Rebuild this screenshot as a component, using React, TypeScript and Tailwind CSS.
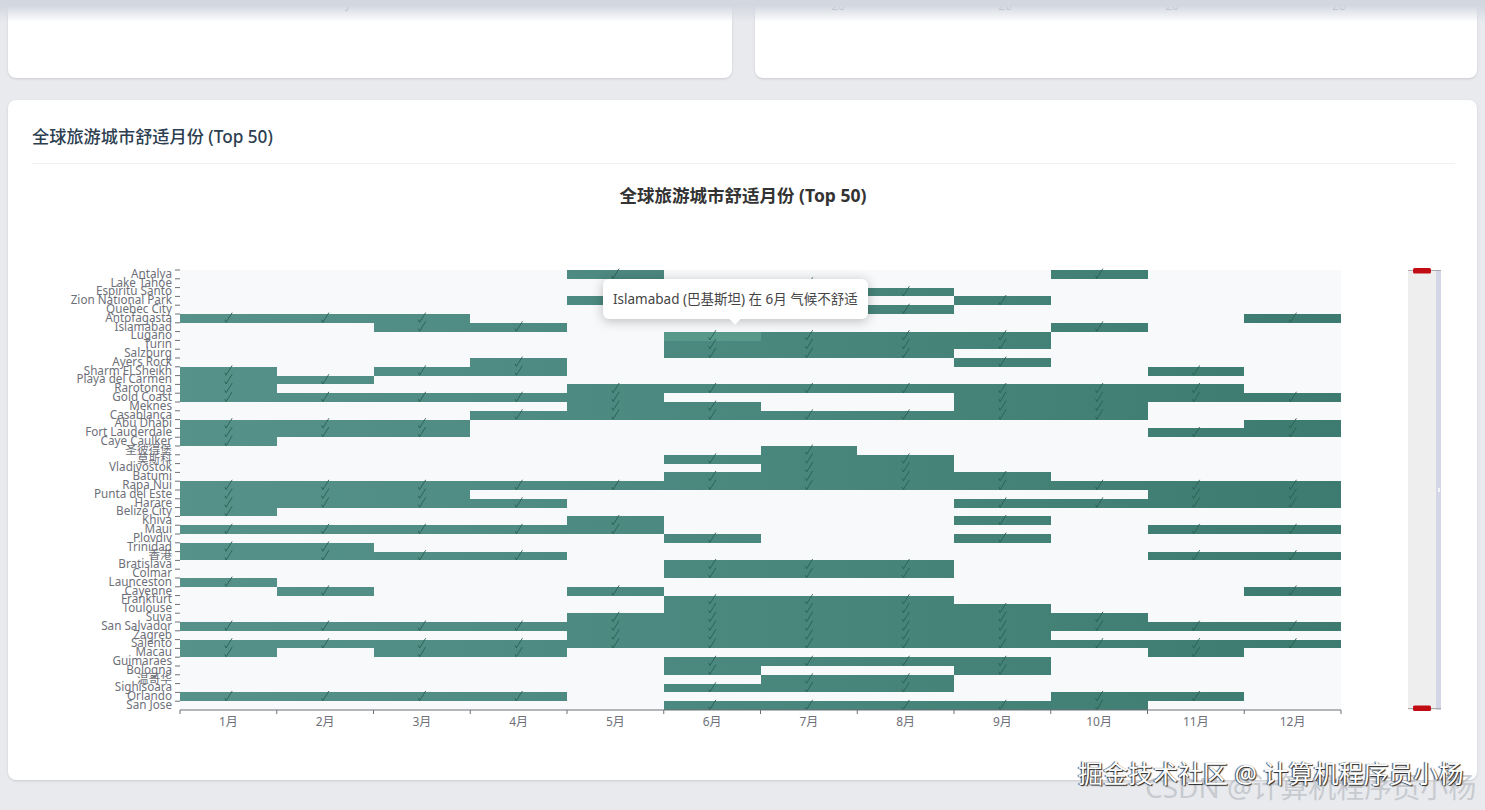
import React from 'react';

const months = ['1月', '2月', '3月', '4月', '5月', '6月', '7月', '8月', '9月', '10月', '11月', '12月'];

// city + comfortable months, top to bottom
const rows: [string, number[]][] = [
  ['Antalya', [5, 10]],
  ['Lake Tahoe', [7]],
  ['Espiritu Santo', [8]],
  ['Zion National Park', [5, 9]],
  ['Quebec City', [6, 7, 8]],
  ['Antofagasta', [1, 2, 3, 12]],
  ['Islamabad', [3, 4, 10]],
  ['Lugano', [6, 7, 8, 9]],
  ['Turin', [6, 7, 8, 9]],
  ['Salzburg', [6, 7, 8]],
  ['Ayers Rock', [4, 9]],
  ['Sharm El Sheikh', [1, 3, 4, 11]],
  ['Playa del Carmen', [1, 2]],
  ['Rarotonga', [1, 5, 6, 7, 8, 9, 10, 11]],
  ['Gold Coast', [1, 2, 3, 4, 5, 9, 10, 11, 12]],
  ['Meknes', [5, 6, 9, 10]],
  ['Casablanca', [4, 5, 6, 7, 8, 9, 10]],
  ['Abu Dhabi', [1, 2, 3, 12]],
  ['Fort Lauderdale', [1, 2, 3, 11, 12]],
  ['Caye Caulker', [1]],
  ['圣彼得堡', [7]],
  ['莫斯科', [6, 7, 8]],
  ['Vladivostok', [7, 8]],
  ['Batumi', [6, 7, 8, 9]],
  ['Rapa Nui', [1, 2, 3, 4, 5, 6, 7, 8, 9, 10, 11, 12]],
  ['Punta del Este', [1, 2, 3, 11, 12]],
  ['Harare', [1, 2, 3, 4, 9, 10, 11, 12]],
  ['Belize City', [1]],
  ['Khiva', [5, 9]],
  ['Maui', [1, 2, 3, 4, 5, 11, 12]],
  ['Plovdiv', [6, 9]],
  ['Trinidad', [1, 2]],
  ['香港', [1, 2, 3, 4, 11, 12]],
  ['Bratislava', [6, 7, 8]],
  ['Colmar', [6, 7, 8]],
  ['Launceston', [1]],
  ['Cayenne', [2, 5, 12]],
  ['Frankfurt', [6, 7, 8]],
  ['Toulouse', [6, 7, 8, 9]],
  ['Suva', [5, 6, 7, 8, 9, 10]],
  ['San Salvador', [1, 2, 3, 4, 5, 6, 7, 8, 9, 10, 11, 12]],
  ['Zagreb', [5, 6, 7, 8, 9]],
  ['Salento', [1, 2, 3, 4, 5, 6, 7, 8, 9, 10, 11, 12]],
  ['Macau', [1, 3, 4, 11]],
  ['Guimaraes', [6, 7, 8, 9]],
  ['Bologna', [6, 9]],
  ['温哥华', [7, 8]],
  ['Sighisoara', [6, 7, 8]],
  ['Orlando', [1, 2, 3, 4, 10, 11]],
  ['San Jose', [6, 7, 8, 9, 10]],
];

const LEFT = 180;
const TOP = 270;
const CELL_W = 96.75;
const CELL_H = 8.8;

function Heatmap() {
  return (
    <svg viewBox="32 170 1423 600" width={1423} height={600} className="mt-[6px] block">
      <defs>
        <linearGradient id="cellFill" gradientUnits="userSpaceOnUse" x1={LEFT} y1="0" x2={LEFT + CELL_W * 12} y2="0">
          <stop offset="0" stopColor="#56928a" />
          <stop offset="1" stopColor="#3d7b70" />
        </linearGradient>
      </defs>

      <text x="743" y="202" textAnchor="middle" className="fill-[#333333] text-[17.5px] font-bold">
        全球旅游城市舒适月份 (Top 50)
      </text>

      <rect x={LEFT} y={TOP} width={CELL_W * 12} height={CELL_H * 50} fill="#f7f9fb" />

      {rows.map(([city, filled], i) => {
        const y = TOP + i * CELL_H;
        return (
          <g key={city}>
            <line x1="175" x2={LEFT} y1={y} y2={y} stroke="#6e7079" />
            <text x="172" y={y + 7.8} textAnchor="end" className="fill-[#6e7079] text-[11.7px]">
              {city}
            </text>
            {filled.map((m) => (
              <rect
                key={m}
                x={LEFT + (m - 1) * CELL_W}
                y={Math.round(y)}
                width={CELL_W}
                height={Math.round(y + CELL_H) - Math.round(y)}
                fill="url(#cellFill)"
                shapeRendering="crispEdges"
              />
            ))}
          </g>
        );
      })}

      {/* hovered cell */}
      <rect x={LEFT + 5 * CELL_W} y="332" width={CELL_W} height="9" fill="#58998c" shapeRendering="crispEdges" />

      {rows.map(([city, filled], i) =>
        filled.map((m) => (
          <path
            key={city + m}
            d="M-3.5 2 L-2.3 4.6 L3.8 -5.2"
            transform={`translate(${LEFT + (m - 0.5) * CELL_W} ${TOP + i * CELL_H + 3.8})`}
            fill="none"
            stroke="#2a5f55"
            strokeWidth="0.9"
          />
        )),
      )}

      <line x1={LEFT} x2={LEFT + CELL_W * 12} y1="710" y2="710" stroke="#6e7079" />
      {Array.from({ length: 13 }).map((_, i) => (
        <line key={i} x1={LEFT + i * CELL_W} x2={LEFT + i * CELL_W} y1="710" y2="714" stroke="#6e7079" />
      ))}
      {months.map((m, i) => (
        <text key={m} x={LEFT + (i + 0.5) * CELL_W} y="726" textAnchor="middle" className="fill-[#6e7079] text-[12px]">
          {m}
        </text>
      ))}

      {/* visual map slider */}
      <rect x="1408" y="270" width="28" height="440" fill="#eeeeee" />
      <rect x="1436" y="270" width="5" height="440" fill="#d2d6e6" />
      <rect x="1408" y="270" width="33" height="1" fill="#aaaaaa" />
      <rect x="1408" y="708" width="33" height="1" fill="#aaaaaa" />
      <rect x="1413" y="268" width="18" height="5.5" rx="1.5" fill="#c20c14" />
      <rect x="1413" y="705.5" width="18" height="5.5" rx="1.5" fill="#c20c14" />
      <rect x="1438" y="488" width="2" height="4" fill="#f2f3f7" />
    </svg>
  );
}

export default function App() {
  return (
    <div className="relative h-[810px] overflow-hidden bg-[#e8eaee] px-2 font-['Noto_Sans','Noto_Sans_CJK_SC',sans-serif]">
      {/* header shadow hanging over the scrolled page */}
      <div className="absolute inset-x-0 top-0 z-10 h-[22px] bg-gradient-to-b from-[#d3d7e0] from-25% to-transparent" />

      <div className="grid h-[78px] grid-cols-[724px_722px] gap-[23px]">
        <div className="overflow-hidden rounded-b-lg bg-white shadow-sm">
          <svg viewBox="0 0 724 16" width={724} height={16} className="block">
            <text x="266" y="5" className="fill-[#8d929b] text-[12px]">
              (
            </text>
            <text x="337" y="8" className="fill-[#8d929b] text-[12px]">
              y
            </text>
            <text x="386" y="5" className="fill-[#8d929b] text-[12px]">
              )
            </text>
          </svg>
        </div>
        <div className="overflow-hidden rounded-b-lg bg-white shadow-sm">
          <svg viewBox="755 0 722 16" width={722} height={16} className="block">
            {[838, 1005, 1172, 1339].map((x) => (
              <text key={x} x={x} y="10" textAnchor="middle" className="fill-[#8d929b] text-[12px]">
                20
              </text>
            ))}
          </svg>
        </div>
      </div>

      <div className="mt-[22px] h-[680px] rounded-lg bg-white pr-[22px] pl-6 shadow-sm">
        <div className="flex h-[64px] items-center border-b border-[#eff1f4] pt-[10px]">
          <h3 className="text-[17.2px] font-medium text-[#2c3e50]">全球旅游城市舒适月份 (Top 50)</h3>
        </div>
        <Heatmap />
      </div>

      {/* tooltip */}
      <div className="absolute left-[603px] top-[279px] z-10 flex h-[40px] w-[265px] items-center rounded-md bg-white pl-[10px] text-[13.5px] whitespace-nowrap text-[#444444] shadow-[0_2px_12px_rgba(0,0,0,0.25)]">
        Islamabad (巴基斯坦) 在 6月 气候不舒适
        <span className="absolute -bottom-[4px] left-[128px] size-2 rotate-45 bg-white" />
      </div>

      {/* watermarks */}
      <div className="absolute left-[1145px] top-[770px] z-20 text-[28px] leading-[34px] whitespace-nowrap text-[#b9bcc2]/70">
        CSDN @计算机程序员小杨
      </div>
      <div className="absolute left-[1078px] top-[757px] z-20 text-[25px] leading-[32px] whitespace-nowrap text-white [text-shadow:1px_1px_1px_#222,-1px_0_1px_#444]">
        掘金技术社区 @ 计算机程序员小杨
      </div>
    </div>
  );
}
